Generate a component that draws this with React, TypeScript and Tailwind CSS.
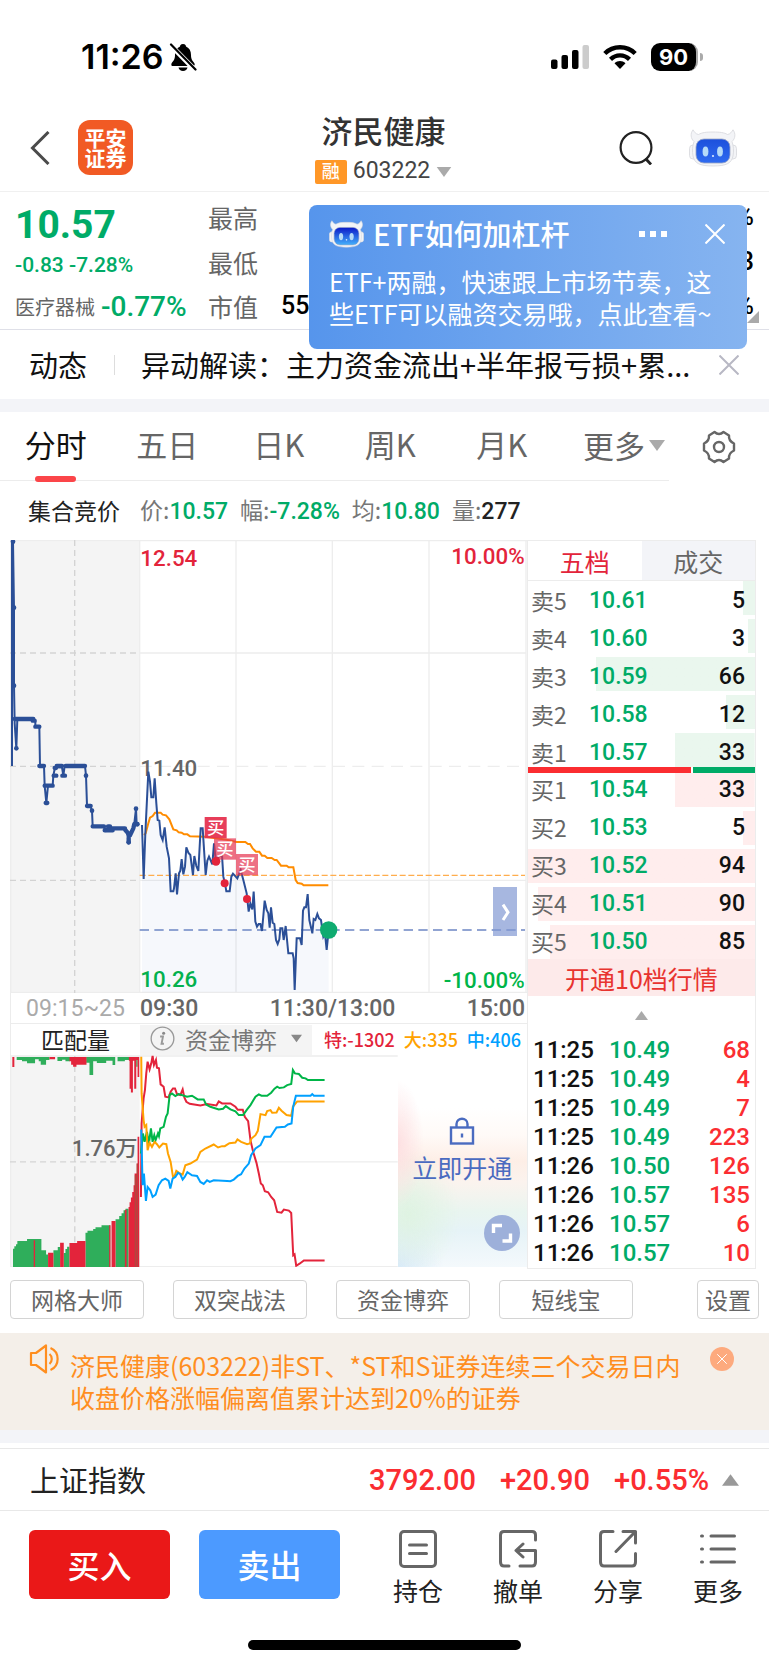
import { useState, type ReactNode } from 'react';

const TABS = ['分时', '五日', '日K', '周K', '月K'];
const TOOLS = ['网格大师', '双突战法', '资金博弈', '短线宝'];
const MAX_QTY = 94;

const SELLS = [
  { label: '卖5', price: '10.61', qty: 5 },
  { label: '卖4', price: '10.60', qty: 3 },
  { label: '卖3', price: '10.59', qty: 66 },
  { label: '卖2', price: '10.58', qty: 12 },
  { label: '卖1', price: '10.57', qty: 33 },
];

const BUYS = [
  { label: '买1', price: '10.54', qty: 33 },
  { label: '买2', price: '10.53', qty: 5 },
  { label: '买3', price: '10.52', qty: 94 },
  { label: '买4', price: '10.51', qty: 90 },
  { label: '买5', price: '10.50', qty: 85 },
];

const TRADES = [
  ['11:25', '10.49', '68'],
  ['11:25', '10.49', '4'],
  ['11:25', '10.49', '7'],
  ['11:25', '10.49', '223'],
  ['11:26', '10.50', '126'],
  ['11:26', '10.57', '135'],
  ['11:26', '10.57', '6'],
  ['11:26', '10.57', '10'],
];

// Call auction, 09:15 to 09:25
const AUCTION_LINE =
  'M36 708V35H39L42 233V467L44 580L49 655L52 567H100L106 574V590H118L120 708H132L134 767L139 819L144 767H158L160 737L165 712H186L190 737L194 708H255L258 737L261 826L272 830L276 842L278 889H312L318 901L325 889L336 896H375L380 905L386 937L390 910L398 900L403 880L408 836L410 883';
const AUCTION_THICK =
  'M44 567H100M98 572H104M106 590H118M118 708H132M134 767H158M137 819H142M161 737H169M164 714H168M170 708H186M187 737H195M197 708H255M261 828H272M278 889H312M314 901H338M324 889H330M336 895H375M376 900L390 916L400 895L403 882H412M386 925V937';
const AUCTION_DOTS = [[39, 35], [42, 233], [42, 467], [49, 655], [258, 737], [276, 842], [386, 937], [408, 836], [412, 883]];

const PRICE_LINE =
  'M36 255L41 417L46 280L55 95L60 125L64 172H70L74 115L79 190L83 240L88 242L92 285L98 300L104 262L110 320L117 355L122 454H130L132 445L137 400L141 463L147 400L151 392L155 357L160 403L165 380L169 322L175 338L181 345L189 405L193 348L199 378L205 393L212 265H218L227 405L232 362L237 350L247 373L252 310L258 365L266 350L276 345L280 410L285 430L289 454H299L304 410L309 401L322 415L332 390L340 420L350 460L356 515L361 490L367 508L371 455L376 545L381 560L386 552H391L396 573L404 482L410 510L415 520L419 563L423 502L428 548L433 552L438 600L443 612L448 598L451 565H457L461 600L467 558L475 640H488L491 655L494 750L500 595H510L515 615L519 512L523 502H528L533 462L538 540L547 580L551 537L556 540L562 522L567 535L573 540L580 590L585 580L590 630L596 570';
const AVG_LINE =
  'M42 285L47 280L55 250L60 233L68 228L75 218H92L98 224L108 226L118 238L130 268L140 271L146 277L155 278L162 283H172L180 289L225 290L290 299L320 306H346L354 312H360L368 325L378 335H388L396 347H404L412 354H425L434 360H440L453 377H470L476 382H490L497 420L503 429L515 431L521 436H595';

const FLOWS = [
  {
    color: '#e3243b',
    d: 'M422 560L424 340L430 265L434 240L438 190L442 155L448 178L453 160L457 138L461 165L467 150L470 173L476 175L481 223L490 230L495 260L505 262L511 245L518 235H524L530 252L540 255L547 238L552 262L558 275L568 281L600 286L620 282L648 286L655 274L665 280H690L705 290L712 299H727L733 320L743 333L750 390L758 425L768 458L775 490L781 520L787 525L793 543L803 546L812 560L821 570L830 605L843 607L850 598L865 601L872 608L878 735L882 732L887 766L897 760L910 750H972',
  },
  {
    color: '#00b548',
    d: 'M422 430L428 370L433 395L440 365L446 400L452 355L457 395L462 375L466 390L473 370L476 378L480 355L490 350L497 320L502 310L508 255L515 250L525 258L535 252L560 260L575 257L592 268H610L617 283L630 290L655 298L668 296L676 288L690 298L705 304L715 315H728L740 298L750 285L765 260L775 253L783 257H800L812 248L822 236L830 230L837 234L850 232L860 225L872 222L877 180L883 190L895 192L905 203L915 205L922 210H972',
  },
  {
    color: '#ffa200',
    d: 'M423 140L424 250L430 330L433 350L438 345L442 420L448 398L455 410L463 395L470 402L477 412L488 400L498 402L503 430L511 455L518 500L523 497L528 482L536 488L547 493L555 465L570 460L590 448L600 425L615 415L640 403L653 412L665 408H673L687 399L705 397L711 388L722 395L740 402L748 400L753 385L765 375L772 362L780 312L795 315L800 303L810 300L815 308L828 307L835 293L843 302L858 315L872 317L877 290L885 280L890 274H972',
  },
  {
    color: '#00a0ff',
    d: 'M423 358L427 525L431 490L437 572L442 530L450 540L457 560L466 553L475 525L485 510L495 505L505 512L510 535L517 505L525 500L533 488L540 492L547 508L553 500L561 486L575 495L590 497L600 515L610 521L620 510L628 515L640 510L680 512L690 513L700 508L712 497L722 492L732 475L745 460L752 435L765 415L780 405L792 380H810L828 352L853 350L862 343L873 340L878 290L886 257H930L935 252L940 257H972',
  },
];

function Triangle({ up, className }: { up?: boolean; className: string }) {
  return (
    <svg viewBox="0 0 16 11" className={className} fill="currentColor">
      <path d={up ? 'M8 0L16 11H0Z' : 'M0 0H16L8 11Z'} />
    </svg>
  );
}

function Close({ className }: { className: string }) {
  return (
    <svg viewBox="0 0 20 20" className={className} fill="none" stroke="currentColor" strokeWidth="2">
      <path d="M0.5 0.5L19.5 19.5M19.5 0.5L0.5 19.5" />
    </svg>
  );
}

function Robot({ className, id, from, to }: { className: string; id: string; from: string; to: string }) {
  return (
    <svg viewBox="0 0 48 38" className={className}>
      <defs>
        <linearGradient id={id} x1="0" y1="0" x2="0" y2="1">
          <stop offset="0" stopColor={from} />
          <stop offset="1" stopColor={to} />
        </linearGradient>
      </defs>
      <g fill="#f3f4f7" stroke="#d6d7dc" strokeWidth="0.800">
        <rect x="0.500" y="16" width="8" height="14" rx="3.500" />
        <rect x="39.500" y="16" width="8" height="14" rx="3.500" />
        <path d="M4 0.800C5.500 3 6.500 5 9.500 5.500C13 3.500 17 3 24 3S35 3.500 38.500 5.500C41.500 5 42.500 3 44 0.800C46.800 4.500 46.500 9.500 43 12.500C44.500 17 45 22 44 27C42.500 34 38 37 24 37S5.500 34 4 27C3 22 3.500 17 5 12.500C1.500 9.500 1.200 4.500 4 0.800Z" />
      </g>
      <rect x="7" y="10" width="34" height="24" rx="8" fill={`url(#${id})`} stroke="#9aa6c4" strokeWidth="0.800" />
      <ellipse cx="16.500" cy="22.500" rx="2.900" ry="5" fill="#b5daf8" />
      <ellipse cx="31" cy="22.500" rx="2.900" ry="5" fill="#b5daf8" />
      <circle cx="24" cy="27" r="1.100" fill="#dbe9ff" />
    </svg>
  );
}

function StatusBar() {
  return (
    <div className="flex h-[104px] items-center justify-between pt-2.5 pr-[66px] pl-[81px]">
      <div className="flex items-center gap-[5px]">
        <span className="font-['Inter'] text-[34px] leading-10 font-semibold text-black">11:26</span>
        <svg viewBox="0 0 28 28" className="size-7">
          <path d="M14 1C11.500 1 11 2.500 11 3.500C7.500 5 6 8 6 12C6 17 4 18 2.500 20.500C2 22.500 2.500 23 4 23H24C25.500 23 26 22 25.500 20.500C24 18 22 17 22 12C22 8 20.500 5 17 3.500C17 2.500 16.500 1 14 1Z" />
          <path d="M9.500 24.500H18.500C18 26.500 16.500 28 14 28S10 26.500 9.500 24.500Z" />
          <path d="M1.500 2L27 28" stroke="#fff" strokeWidth="5" />
          <path d="M2 1.500L26.500 26.500" stroke="#000" strokeWidth="2.200" strokeLinecap="round" />
        </svg>
      </div>
      <div className="flex items-center gap-3.5">
        <svg viewBox="0 0 38 24" className="h-6 w-[38px]">
          <rect x="0" y="14.500" width="6.500" height="9.500" rx="2" />
          <rect x="10.500" y="10" width="6.500" height="14" rx="2" />
          <rect x="21" y="5" width="6.500" height="19" rx="2" />
          <rect x="31.500" y="0" width="6.500" height="24" rx="2" fill="#ccc" />
        </svg>
        <svg viewBox="0 0 34 24" className="h-6 w-[34px]" fill="none" stroke="#000" strokeWidth="4.400">
          <path d="M1.800 8.500C10 0.200 24 0.200 32.200 8.500" />
          <path d="M7.500 14.300C13 9 21 9 26.500 14.300" />
          <path d="M17 24L11.500 18.300C14.500 15.300 19.500 15.300 22.500 18.300Z" fill="#000" stroke="none" />
        </svg>
        <div className="flex items-center gap-0.5">
          <div className="flex h-7 w-[47px] items-center justify-center rounded-[9px] border-r-2 border-[#aaa] bg-black font-['Inter'] text-[22px] font-bold text-white">
            90
          </div>
          <span className="h-2 w-[3px] rounded-r-full bg-[#aaa]" />
        </div>
      </div>
    </div>
  );
}

function Header() {
  return (
    <header className="flex h-[88px] items-center justify-between border-b border-[#f0f0f0] pr-8 pl-[30px]">
      <div className="flex w-[150px] items-center gap-7">
        <button aria-label="返回">
          <svg viewBox="0 0 20 34" className="h-[34px] w-5" fill="none" stroke="#4a4a4a" strokeWidth="3">
            <path d="M18.500 1L2.500 17L18.500 33" />
          </svg>
        </button>
        <div className="flex size-[55px] flex-col items-center justify-center rounded-xl bg-[#f15a24] pb-0.5 text-[21px] leading-5 font-bold text-white">
          <span>平安</span>
          <span>证券</span>
        </div>
      </div>
      <div className="flex flex-col items-center pt-2">
        <h1 className="text-[31px] leading-8 font-medium text-[#333]">济民健康</h1>
        <button className="mt-2 flex h-9 items-center gap-1.5">
          <span className="flex h-6 w-8 items-center justify-center rounded-xs bg-[#ff9727] pb-0.5 text-[18px] font-medium text-white">融</span>
          <span className="font-['Roboto'] text-[23px] text-[#444]">603222</span>
          <Triangle className="h-2.5 w-4 text-[#aaa]" />
        </button>
      </div>
      <div className="flex w-[150px] items-center justify-end gap-9">
        <button aria-label="搜索">
          <svg viewBox="0 0 34 34" className="size-[34px]" fill="none" stroke="#222" strokeWidth="2.200">
            <circle cx="17" cy="16.500" r="15.400" />
            <path d="M26.500 27.500L32 33.500" strokeWidth="2.800" />
          </svg>
        </button>
        <Robot id="robot-header" from="#1c50dc" to="#2f6bf0" className="h-[38px] w-12" />
      </div>
    </header>
  );
}

function Popup({ onClose }: { onClose: () => void }) {
  return (
    <aside className="absolute top-[13px] right-[22px] left-[309px] z-10 rounded-lg bg-linear-to-r from-[#5695ec] to-[#86b4f0] px-5 pt-2 pb-5 text-white">
      <div className="flex h-[42px] items-center">
        <Robot id="robot-popup" from="#0a18c8" to="#45b0fb" className="h-7 w-[35px]" />
        <h2 className="ml-[9px] text-[29px] font-medium">ETF如何加杠杆</h2>
        <button aria-label="更多选项" className="ml-auto flex gap-[5px]">
          <i className="size-1.5 bg-white" />
          <i className="size-1.5 bg-white" />
          <i className="size-1.5 bg-white" />
        </button>
        <button aria-label="关闭" onClick={onClose} className="mr-0.5 ml-[38px]">
          <Close className="size-5" />
        </button>
      </div>
      <p className="mt-2.5 text-[25px] leading-8 whitespace-nowrap">
        ETF+两融，快速跟上市场节奏，这
        <br />
        些ETF可以融资交易哦，点此查看~
      </p>
    </aside>
  );
}

function Quote() {
  const [open, setOpen] = useState(true);
  return (
    <section className="relative flex border-b border-[#dfe0e8] pr-[15px] pl-[15px]">
      <div className="w-[193px] pt-[11px] text-[#00ab67]">
        <p className="font-['Roboto'] text-[39px] leading-11 font-bold">10.57</p>
        <p className="font-['Roboto'] text-[21px] leading-9 font-medium">-0.83 -7.28%</p>
        <p className="mt-0.5 flex items-center gap-1.5 leading-11">
          <span className="text-[20px] text-[#666]">医疗器械</span>
          <span className="font-['Roboto'] text-[28px] font-medium">-0.77%</span>
        </p>
      </div>
      <dl className="grid flex-1 grid-cols-[73px_1fr_auto] pt-[3px] leading-11 text-black">
        <dt className="text-[25px] text-[#666]">最高</dt>
        <dd />
        <dd className="text-right font-['Roboto'] text-[25px] font-medium">%</dd>
        <dt className="text-[25px] text-[#666]">最低</dt>
        <dd />
        <dd className="text-right font-['Roboto'] text-[25px] font-medium">3</dd>
        <dt className="text-[25px] text-[#666]">市值</dt>
        <dd className="font-['Roboto'] text-[25px] font-medium">55</dd>
        <dd className="text-right font-['Roboto'] text-[25px] font-medium">%</dd>
      </dl>
      <svg viewBox="0 0 12 12" className="absolute right-2.5 bottom-1.5 size-3" fill="#aaa">
        <path d="M12 0V12H0Z" />
      </svg>
      {open && <Popup onClose={() => setOpen(false)} />}
    </section>
  );
}

function PeriodTabs() {
  const [active, setActive] = useState('分时');
  return (
    <nav className="flex h-[69px] items-center">
      <div className="grid h-full w-[87%] grid-cols-6 border-b border-[#ececec] text-[31px] text-[#666]">
        {TABS.map((tab) => (
          <button key={tab} onClick={() => setActive(tab)} className="flex flex-col items-center">
            <span className={active === tab ? 'flex-1 leading-16 text-[#111]' : 'flex-1 leading-16'}>{tab}</span>
            {active === tab && <span className="h-1.5 w-[41px] rounded-sm bg-[#fb4549]" />}
          </button>
        ))}
        <button className="flex items-center justify-end gap-1 pr-1 pb-1">
          更多
          <Triangle className="h-[11px] w-4 text-[#aaa]" />
        </button>
      </div>
      <button aria-label="设置" className="flex flex-1 justify-center">
        <svg viewBox="0 0 34 34" className="size-[34px]" fill="none" stroke="#666" strokeWidth="2.400" strokeLinejoin="round">
          <path d="M12.500 2Q17 6 21.500 2L27 5.500Q26.500 11 32 13.500V20.500Q26.500 23 27 28.500L21.500 32Q17 28 12.500 32L7 28.500Q7.500 23 2 20.500V13.500Q7.500 11 7 5.500Z" />
          <circle cx="17" cy="17" r="5" />
        </svg>
      </button>
    </nav>
  );
}

function Stat({ label, value, className }: { label: string; value: string; className: string }) {
  return (
    <span className="flex items-baseline">
      <span className="text-[23px] text-[#777]">{label}:</span>
      <span className={className}>{value}</span>
    </span>
  );
}

function BuyTag({ x, y, opacity }: { x: number; y: number; opacity: number }) {
  return (
    <g>
      <rect x={x} y={y} width="66" height="64" fill="#e63350" opacity={opacity} />
      <text x={x + 33} y={y + 51} fontSize="52" fill="#fff" textAnchor="middle" fontWeight="500">
        买
      </text>
    </g>
  );
}

// Drawn at three units to the pixel
function PriceChart() {
  return (
    <svg viewBox="30 30 1551 1359" className="block w-full">
      <rect x="30" y="30" width="389" height="1359" fill="#f4f4f4" />
      <g stroke="#ededed" strokeWidth="4" fill="none">
        <path d="M32 30V1389M30 32H1581M419 32V1389M708 32V1389M997 32V1389M1287 32V1389M1578 32V1389M419 369H1578M419 1051H1578" />
        <path d="M419 709H1578" strokeDasharray="36 22" />
        <path d="M30 1387H1581" />
      </g>
      <path d="M224 30V1389M30 369H419M30 709H419M30 1051H419" stroke="#d3d3d3" strokeWidth="4" strokeDasharray="18 12" fill="none" />
      <path d={AUCTION_LINE} stroke="#2b4f97" strokeWidth="6" fill="none" />
      <path d={AUCTION_THICK} stroke="#2b4f97" strokeWidth="13" strokeLinecap="round" strokeLinejoin="round" fill="none" />
      {AUCTION_DOTS.map(([x, y]) => (
        <circle key={`${x}-${y}`} cx={x} cy={y} r="7" fill="#2b4f97" />
      ))}
      <g fontFamily="Roboto" fontSize="67" fontWeight="500">
        <text x="421" y="107" fill="#e3243b">12.54</text>
        <text x="1574" y="102" fill="#e3243b" textAnchor="end">10.00%</text>
        <text x="421" y="738" fill="#666">11.40</text>
        <text x="421" y="1370" fill="#00b548">10.26</text>
        <text x="1574" y="1374" fill="#00b548" textAnchor="end">-10.00%</text>
      </g>
      <g transform="translate(390 630)">
        <path d={`${PRICE_LINE}V757H36Z`} fill="#4a72c8" opacity="0.050" />
        <path d="M29 406H1185" stroke="#ffad4d" strokeWidth="4" strokeDasharray="18 8" />
        <path d="M29 570H1185" stroke="#6d86c4" strokeWidth="5" strokeDasharray="28 16" />
        <path d={AVG_LINE} stroke="#ff8c00" strokeWidth="6" fill="none" />
        <path d={PRICE_LINE} stroke="#2b4f97" strokeWidth="6" fill="none" />
        <BuyTag x={224} y={231} opacity={0.95} />
        <BuyTag x={252} y={295} opacity={0.7} />
        <BuyTag x={318} y={342} opacity={0.7} />
        <g fill="#e3243b">
          <circle cx="258" cy="364" r="13" />
          <circle cx="284" cy="430" r="12" />
          <circle cx="351" cy="477" r="12" />
        </g>
        <circle cx="596" cy="570" r="26" fill="#0fab70" />
        <rect x="1089" y="441" width="72" height="147" fill="#8298d3" opacity="0.700" />
        <path d="M1119 494L1134 517L1119 540" stroke="#fff" strokeWidth="9" fill="none" />
      </g>
    </svg>
  );
}

function FlowChart() {
  return (
    <svg viewBox="30 135 1161 636" className="block w-3/4">
      <rect x="30" y="138" width="388" height="633" fill="#f4f4f4" />
      <path d="M32 135V771M30 138H1191M418 455H1191M30 769H1191" stroke="#ededed" strokeWidth="4" />
      <path d="M224 138V771M30 455H418" stroke="#d3d3d3" strokeWidth="4" strokeDasharray="18 12" />
      <g fill="#2fae5b">
        <path d="M50 141H148V150H138V164H122V154H116V148H105V160H81V154H66V150H50ZM172 141H210V154H196V149H186V153H172ZM258 141H345V165H337V152H318V159H290V154H279V195H268V158H258ZM352 141H388V150H374V154H352ZM408 141H412V170H408Z" />
        <path d="M39 771V715H43V708H48V702H52V692H81V686H124V720H138V732H144V771ZM160 771V720H173V710H180V771ZM191 771V728H196V716H201V709H208V771ZM256 771V667H262V661H279V656H286V651H304V645H330V771ZM346 771V627H357V617H364V609H370V600H376V595H385V771Z" />
      </g>
      <g fill="#e3243b">
        <path d="M37 141H43V171H37ZM148 141H165V148H148ZM208 141H259V164H229V170H219V164H213V154H208ZM386 141H417V201H412V150H408V236H402V152H398V247H392V236H388V152H386Z" />
        <path d="M101 690H105V771H101ZM144 771V727H160V771ZM180 771V697H191V771ZM208 771V698H231V692H256V771ZM327 771V645H331V771ZM334 771V632H346V771ZM374 771V598H379V771ZM385 771V590H388V576H392V562H396V545H400V525H403V490H409V460H412V380H417V771Z" />
      </g>
      <path d="M405 495V771M411 460V771" stroke="#7d6b45" strokeWidth="2" />
      <text x="412" y="438" fontSize="66" fill="#666" textAnchor="end" fontWeight="500" fontFamily="Roboto, 'Noto Sans CJK SC', sans-serif">
        1.76万
      </text>
      {FLOWS.map((flow) => (
        <path key={flow.color} d={flow.d} stroke={flow.color} strokeWidth="6" fill="none" />
      ))}
    </svg>
  );
}

function UnlockPanel() {
  return (
    <div className="relative w-1/4">
      <button className="flex h-full w-full flex-col items-center bg-[radial-gradient(20%_30%_at_0%_42%,#fde0e2_0%,#fde0e200_100%),radial-gradient(40%_30%_at_8%_75%,#dff3e2_0%,#dff3e200_100%),radial-gradient(35%_25%_at_0%_100%,#d8e9fb_0%,#d8e9fb00_100%),linear-gradient(to_bottom,#fff_0%,#fff_25%,#fffaf7_38%,#fdeee6_50%,#fbf3ee_60%,#e9f5f0_74%,#e6f3f7_83%,#f4f9fc_100%)] pt-[62px] text-[#4a6bc0]">
        <svg viewBox="0 0 26 28" className="h-7 w-[26px]" fill="none" stroke="currentColor" strokeWidth="2.400">
          <rect x="2" y="10.500" width="22" height="16" />
          <path d="M7.500 10V7C7.500 0 18.500 0 18.500 7V10M13 16.500V20.500" />
        </svg>
        <span className="mt-1 text-[25px] leading-9">立即开通</span>
      </button>
      <button aria-label="全屏" className="absolute right-[7px] bottom-4 rounded-full bg-[#9db0da]">
        <svg viewBox="0 0 36 36" className="size-9" fill="none" stroke="#fff" strokeWidth="3.400">
          <path d="M9.500 18V10.500H18M26.500 18.500V26H18.500" />
        </svg>
      </button>
    </div>
  );
}

function BookRows({ rows, tint }: { rows: typeof SELLS; tint: string }) {
  return (
    <tbody className="flex flex-col gap-1">
      {rows.map((row) => (
        <tr
          key={row.label}
          className={`flex h-[34px] items-center bg-linear-to-r bg-right bg-no-repeat pr-2.5 pl-[3px] ${tint}`}
          style={{ backgroundSize: `${(row.qty / MAX_QTY) * 100}% 100%` }}
        >
          <th scope="row" className="w-[58px] pb-[3px] text-left text-[23px] leading-8 font-normal text-[#666]">
            {row.label}
          </th>
          <td className="font-['Roboto'] text-[23px] font-medium text-[#00ab67]">{row.price}</td>
          <td className="flex-1 text-right font-['Roboto'] text-[23px] font-medium text-[#111]">{row.qty}</td>
        </tr>
      ))}
    </tbody>
  );
}

function OrderBook() {
  return (
    <div className="flex w-[229px] shrink-0 flex-col border-x border-b border-[#ececec]">
      <div className="flex h-[41px] border-y border-[#ececec] text-[25px] leading-9">
        <button className="flex-1 text-[#e3243b]">五档</button>
        <button className="flex-1 bg-[#f3f4f8] text-[#666]">成交</button>
      </div>
      <table className="block">
        <BookRows rows={SELLS} tint="from-[#eaf7ee] to-[#eaf7ee] pt-1.5" />
      </table>
      <div className="flex h-1.5 gap-0.5">
        <span className="w-[72%] bg-[#fb2d31]" />
        <span className="flex-1 bg-[#00ab67]" />
      </div>
      <table className="block">
        <BookRows rows={BUYS} tint="from-[#ffeded] to-[#ffeded]" />
      </table>
      <button className="h-[37px] bg-[#fdeaea] text-[25px] leading-9 text-[#e8332f]">开通10档行情</button>
      <div className="flex h-10 justify-center pt-[15px]">
        <Triangle up className="h-[9px] w-[13px] text-[#aaa]" />
      </div>
      <table className="block">
        <tbody className="block">
          {TRADES.map(([time, price, qty], i) => (
            <tr key={i} className="flex pr-[5px] pl-[5px] font-['Roboto'] text-[24px] leading-[29px] font-medium">
              <td className="w-[76px] text-[#111]">{time}</td>
              <td className="text-[#00ab67]">{price}</td>
              <td className="flex-1 text-right text-[#fb2d31]">{qty}</td>
            </tr>
          ))}
        </tbody>
      </table>
    </div>
  );
}

function ChartArea() {
  return (
    <section className="flex pr-[13px] pl-2.5">
      <div className="min-w-0 flex-1">
        <PriceChart />
        <div className="flex h-[31px] border-b border-l border-[#ececec] font-['Roboto'] text-[23px] leading-8 text-[#666]">
          <span className="w-1/4 text-center text-[#aaa]">09:15~25</span>
          <div className="flex flex-1 justify-between pr-0.5 font-medium">
            <span>09:30</span>
            <span>11:30/13:00</span>
            <span>15:00</span>
          </div>
        </div>
        <div className="flex h-[31px] items-center border-l border-[#ececec] text-[23px] leading-[30px]">
          <button className="w-1/4 pb-0.5 text-[#222]">匹配量</button>
          <button className="flex h-[30px] items-center gap-2.5 bg-[#f4f4f4] px-2.5 pb-0.5 text-[#777]">
            <svg viewBox="0 0 26 26" className="size-[25px]" fill="none" stroke="#999" strokeWidth="1.400">
              <circle cx="13" cy="13" r="11.800" />
              <path d="M10.500 11H13.500L12 18.500H14.500" strokeWidth="2" />
              <circle cx="14.200" cy="7.500" r="1.600" fill="#888" stroke="none" />
            </svg>
            资金博弈
            <Triangle className="ml-1 h-[9px] w-[11px] text-[#888]" />
          </button>
          <div className="flex flex-1 justify-between pr-1.5 pb-0.5 pl-3 text-[18px] font-medium whitespace-nowrap">
            <span className="text-[#e3243b]">特:-1302</span>
            <span className="text-[#ffa200]">大:335</span>
            <span className="text-[#00a0ff]">中:406</span>
          </div>
        </div>
        <div className="flex">
          <FlowChart />
          <UnlockPanel />
        </div>
      </div>
      <OrderBook />
    </section>
  );
}

function Action({ label, children }: { label: string; children: ReactNode }) {
  return (
    <button className="flex w-[50px] flex-col items-center text-[25px] leading-9 text-[#222]">
      <svg viewBox="0 0 38 38" className="mb-1 size-[38px]" fill="none" stroke="#666" strokeWidth="3" strokeLinecap="round" strokeLinejoin="round">
        {children}
      </svg>
      {label}
    </button>
  );
}

export default function App() {
  return (
    <main className="w-full bg-white font-['Noto_Sans_CJK_SC',sans-serif] text-[#222]">
      <StatusBar />
      <Header />
      <Quote />
      <div className="flex h-[69px] items-center pr-[30px] pl-[29px] text-[29px] text-[#111]">
        <span>动态</span>
        <span className="mr-[26px] ml-[27px] h-5 w-px bg-[#ddd]" />
        <a href="#news" className="min-w-0 flex-1 whitespace-nowrap">异动解读：主力资金流出+半年报亏损+累...</a>
        <button aria-label="关闭动态">
          <Close className="size-5 text-[#b8b8c4]" />
        </button>
      </div>
      <div className="h-[13px] bg-[#f3f4f8]" />
      <PeriodTabs />
      <div className="flex h-[59px] items-center gap-3 pt-px pl-7">
        <span className="mr-2 pb-0.5 text-[23px] text-[#222]">集合竞价</span>
        <Stat label="价" value="10.57" className="font-['Roboto'] text-[23px] font-medium text-[#00ab67]" />
        <Stat label="幅" value="-7.28%" className="font-['Roboto'] text-[23px] font-medium text-[#00ab67]" />
        <Stat label="均" value="10.80" className="font-['Roboto'] text-[23px] font-medium text-[#00ab67]" />
        <Stat label="量" value="277" className="font-['Roboto'] text-[23px] font-medium text-[#222]" />
      </div>
      <ChartArea />
      <div className="flex gap-[29px] px-2.5 pt-[11px] pb-3.5 text-[23px] text-[#666]">
        {TOOLS.map((tool) => (
          <button key={tool} className="h-[39px] w-[134px] rounded-sm border border-[#d4d4d4] pb-0.5 leading-8">
            {tool}
          </button>
        ))}
        <button className="ml-auto h-[39px] w-[62px] rounded-sm border border-[#d4d4d4] pb-0.5 leading-8">设置</button>
      </div>
      <div className="flex items-start bg-[#f4efe9] pt-[11px] pr-[35px] pb-[17px] pl-[29px] text-[#ff8e1f]">
        <svg viewBox="0 0 32 30" className="h-[30px] w-8" fill="none" stroke="currentColor" strokeWidth="2.200" strokeLinejoin="round">
          <path d="M2 9H7L17 1.500V28.500L7 21H2Z" />
          <path d="M20.500 10C23.500 12.500 23.500 17.500 20.500 20M21.500 4C31 8 31 22 21.500 26" />
        </svg>
        <p className="mt-[5px] ml-[9px] text-[25px] leading-8 whitespace-nowrap">
          济民健康(603222)非ST、*ST和S证券连续三个交易日内
          <br />
          收盘价格涨幅偏离值累计达到20%的证券
        </p>
        <button aria-label="关闭公告" className="mt-[3px] ml-auto flex size-6 items-center justify-center rounded-full bg-[#fdaa7e] text-white">
          <Close className="size-2.5" />
        </button>
      </div>
      <div className="h-[13px] bg-[#f3f4f8]" />
      <div className="mt-[5px] flex h-[63px] items-center border-y border-[#e8e8e8] pr-[30px] pl-[30px]">
        <span className="text-[29px] text-[#222]">上证指数</span>
        <div className="ml-auto flex items-center gap-6 pt-0.5 font-['Roboto'] text-[29px] font-medium text-[#fb2d31]">
          <span>3792.00</span>
          <span>+20.90</span>
          <span>+0.55%</span>
        </div>
        <Triangle up className="ml-[13px] h-3 w-[17px] text-[#999]" />
      </div>
      <footer className="flex items-start justify-between pt-[19px] pr-[26px] pl-[29px]">
        <div className="flex gap-[29px] text-[32px] font-medium text-white">
          <button className="h-[69px] w-[141px] rounded-md bg-[#ea1818] pb-0.5">买入</button>
          <button className="h-[69px] w-[141px] rounded-md bg-[#4c9aff] pb-0.5">卖出</button>
        </div>
        <div className="flex gap-[50px]">
          <Action label="持仓">
            <rect x="1.500" y="1.500" width="35" height="35" rx="3.500" />
            <path d="M10.500 15H27.500M10.500 23.500H27.500" />
          </Action>
          <Action label="撤单">
            <path d="M36.500 10V5C36.500 2.500 35.500 1.500 33 1.500H5C2.500 1.500 1.500 2.500 1.500 5V32C1.500 35 2.500 36 5 36H10M21 36H33C35.500 36 36.500 35 36.500 32V20.500H18M24 14L17 20.500L24 27" />
          </Action>
          <Action label="分享">
            <path d="M14 1.500H5C2.500 1.500 1.500 2.500 1.500 5V32C1.500 35 2.500 36 5 36H33C35.500 36 36.500 35 36.500 32V23.500M24 1.500H36.500V13M36 2L17 21.500" />
          </Action>
          <Action label="更多">
            <path d="M2.500 6H3.500M12 6H35.500M2.500 19H3.500M12 19H35.500M2.500 32H3.500M12 32H35.500" />
          </Action>
        </div>
      </footer>
      <div className="flex justify-center pt-8 pb-4">
        <span className="h-2.5 w-[273px] rounded-full bg-black" />
      </div>
    </main>
  );
}
